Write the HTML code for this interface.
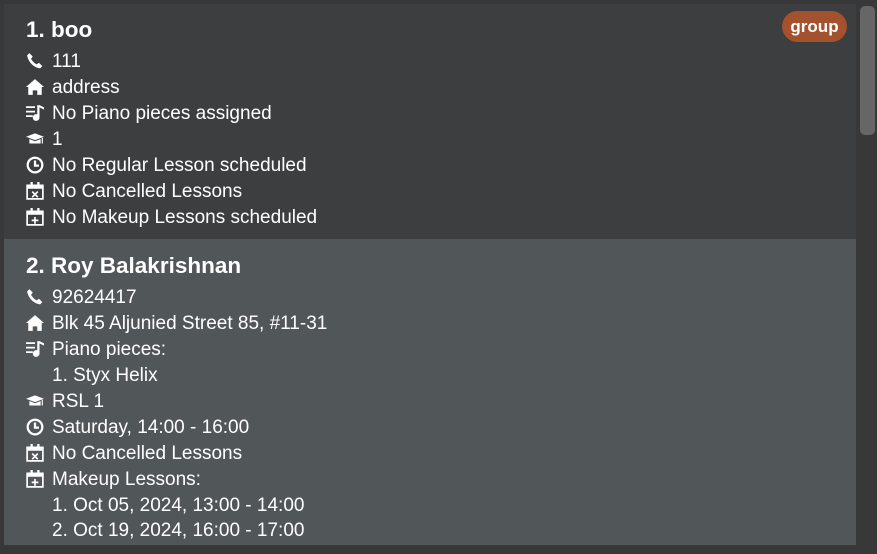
<!DOCTYPE html>
<html><head><meta charset="utf-8"><style>
body{margin:0;width:877px;height:554px;background:#383838;overflow:hidden;font-family:"Segoe UI","Liberation Sans",sans-serif;color:#fff;position:relative}
.card{position:absolute;left:4px;width:852px}
.c1{top:4px;height:235px;background:#3c3e40}
.c2{top:239px;height:306px;background:#515658}
.t{position:absolute;left:22px;font-size:22.5px;font-weight:bold;white-space:nowrap}
.l{position:absolute;left:48px;font-size:19px;white-space:nowrap;line-height:26px;margin-top:1px}
.i{position:absolute;left:22px;width:18px;height:18px}
.tag{position:absolute;left:782px;top:11px;width:65px;height:31px;border-radius:16px;background:#a4522d;font-weight:bold;font-size:17px;text-align:center;line-height:31px}
.sb{position:absolute;left:860px;top:6px;width:15px;height:129px;border-radius:5px;background:#666}
</style></head><body>
<svg width="0" height="0" style="position:absolute"><defs>
<symbol id="ph" viewBox="0 0 16 16"><path d="M3 1l3 3-1.5 2c1 2 3 4 5 5l2-1.5 3 3-2 2C7 14 2 9 1 3z" fill="#fff"/></symbol>
<symbol id="ho" viewBox="0 0 16 16"><path d="M8 1L0 8h2v7h4v-4h4v4h4V8h2z" fill="#fff"/></symbol>
<symbol id="mu" viewBox="0 0 16 16"><path d="M0 2h8v1.5H0zM0 6h8v1.5H0zM0 10h6v1.5H0z" fill="#fff"/><path d="M10 1h2v11a3 3 0 1 1-2-2.8z M12 1l4 2v2l-4-2z" fill="#fff"/></symbol>
<symbol id="ca" viewBox="0 0 16 16"><path d="M0 6l8-3 8 3-8 3z M3 8v4h10V8l-5 2z M14 7v5h1V7z" fill="#fff"/></symbol>
<symbol id="cl" viewBox="0 0 16 16"><circle cx="8" cy="8" r="6.5" fill="none" stroke="#fff" stroke-width="2"/><path d="M8 4v4.5h3.5" fill="none" stroke="#fff" stroke-width="2"/></symbol>
<symbol id="cx" viewBox="0 0 16 16"><path d="M1 3h14v12H1z" fill="none" stroke="#fff" stroke-width="1.5"/><path d="M1 3h14v3H1zM4 0h2v3H4zM10 0h2v3h-2z" fill="#fff"/><path d="M5.5 8.5l5 5M10.5 8.5l-5 5" stroke="#fff" stroke-width="1.5"/></symbol>
<symbol id="cp" viewBox="0 0 16 16"><path d="M1 3h14v12H1z" fill="none" stroke="#fff" stroke-width="1.5"/><path d="M1 3h14v3H1zM4 0h2v3H4zM10 0h2v3h-2z" fill="#fff"/><path d="M8 8v6M5 11h6" stroke="#fff" stroke-width="1.5"/></symbol>
</defs></svg>
<div class="card c1">
<div class="t" style="top:13px">1. boo</div>
<svg class="i" style="top:48px"><use href="#ph"/></svg><div class="l" style="top:44px">111</div>
<svg class="i" style="top:74px"><use href="#ho"/></svg><div class="l" style="top:70px">address</div>
<svg class="i" style="top:100px"><use href="#mu"/></svg><div class="l" style="top:96px">No Piano pieces assigned</div>
<svg class="i" style="top:126px"><use href="#ca"/></svg><div class="l" style="top:122px">1</div>
<svg class="i" style="top:152px"><use href="#cl"/></svg><div class="l" style="top:148px">No Regular Lesson scheduled</div>
<svg class="i" style="top:178px"><use href="#cx"/></svg><div class="l" style="top:174px">No Cancelled Lessons</div>
<svg class="i" style="top:204px"><use href="#cp"/></svg><div class="l" style="top:200px">No Makeup Lessons scheduled</div>
</div>
<div class="card c2">
<div class="t" style="top:14px">2. Roy Balakrishnan</div>
<svg class="i" style="top:49px"><use href="#ph"/></svg><div class="l" style="top:45px">92624417</div>
<svg class="i" style="top:75px"><use href="#ho"/></svg><div class="l" style="top:71px">Blk 45 Aljunied Street 85, #11-31</div>
<svg class="i" style="top:101px"><use href="#mu"/></svg><div class="l" style="top:97px">Piano pieces:</div>
<div class="l" style="top:123px">1. Styx Helix</div>
<svg class="i" style="top:153px"><use href="#ca"/></svg><div class="l" style="top:149px">RSL 1</div>
<svg class="i" style="top:179px"><use href="#cl"/></svg><div class="l" style="top:175px">Saturday, 14:00 - 16:00</div>
<svg class="i" style="top:205px"><use href="#cx"/></svg><div class="l" style="top:201px">No Cancelled Lessons</div>
<svg class="i" style="top:231px"><use href="#cp"/></svg><div class="l" style="top:227px">Makeup Lessons:</div>
<div class="l" style="top:253px">1. Oct 05, 2024, 13:00 - 14:00</div>
<div class="l" style="top:278px">2. Oct 19, 2024, 16:00 - 17:00</div>
</div>
<div class="tag">group</div>
<div class="sb"></div>
</body></html>
